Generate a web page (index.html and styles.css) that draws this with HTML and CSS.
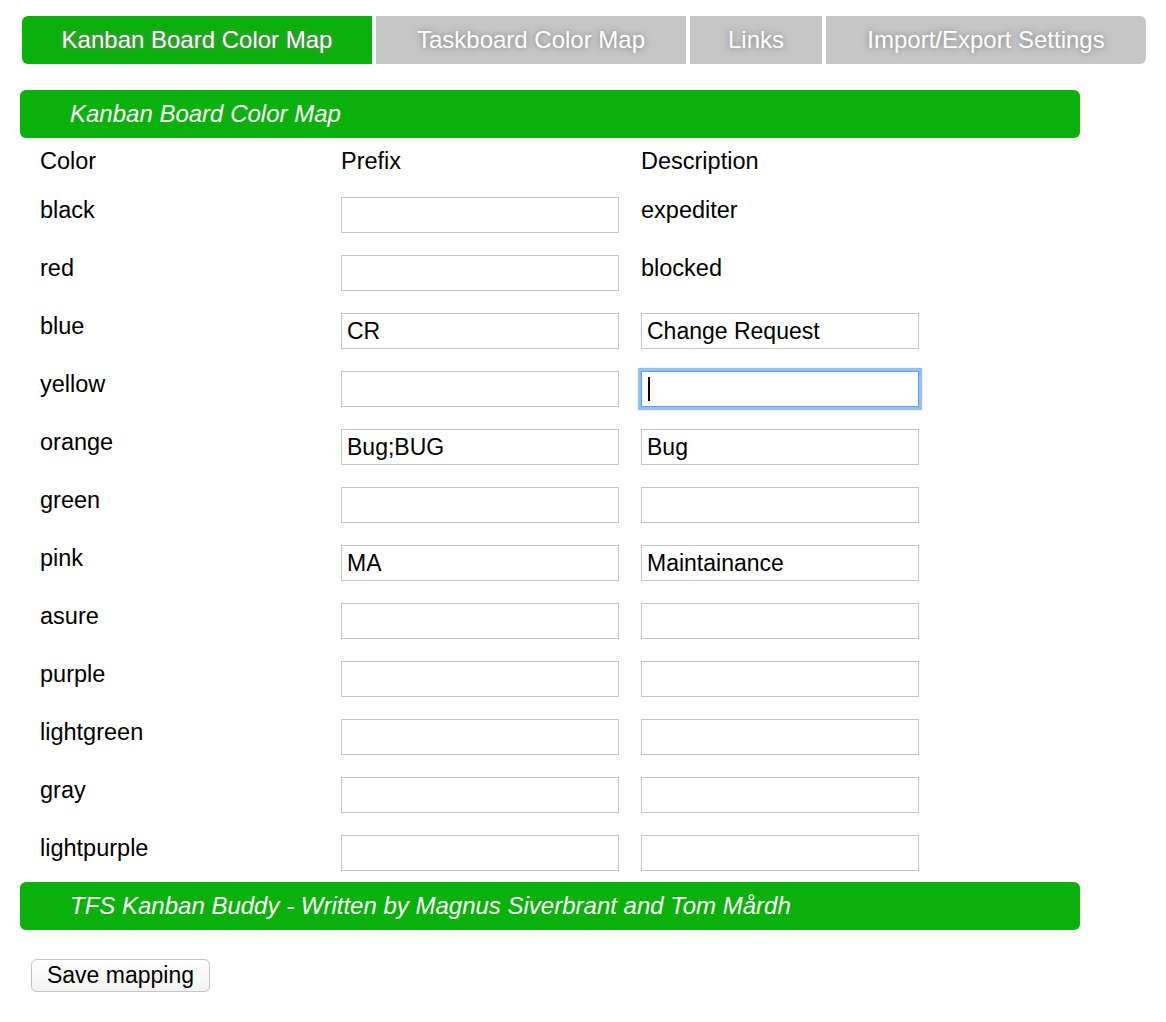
FILE: index.html
```html
<!DOCTYPE html>
<html lang="en">

<head>
    <meta charset="UTF-8">
    <title>TFS Kanban Buddy - Options</title>
    <link rel="stylesheet" href="styles.css">
</head>

<body>
    <div class="page">
        <div class="tabs">
            <div class="tab active" id="tab-kanban">Kanban Board Color Map</div>
            <div class="tab" id="tab-task">Taskboard Color Map</div>
            <div class="tab" id="tab-links">Links</div>
            <div class="tab last" id="tab-import">Import/Export Settings</div>
        </div>

        <div class="section">
            <div class="bar">Kanban Board Color Map</div>
            <div class="map">
                <div class="head">Color</div>
                <div class="head">Prefix</div>
                <div class="head">Description</div>

                <div class="label">black</div>
                <div><input type="text" class="field"></div>
                <div class="label">expediter</div>

                <div class="label">red</div>
                <div><input type="text" class="field"></div>
                <div class="label">blocked</div>

                <div class="label">blue</div>
                <div><input type="text" class="field" value="CR"></div>
                <div><input type="text" class="field" value="Change Request"></div>

                <div class="label">yellow</div>
                <div><input type="text" class="field"></div>
                <div class="focus"><input type="text" class="field focused"></div>

                <div class="label">orange</div>
                <div><input type="text" class="field" value="Bug;BUG"></div>
                <div><input type="text" class="field" value="Bug"></div>

                <div class="label">green</div>
                <div><input type="text" class="field"></div>
                <div><input type="text" class="field"></div>

                <div class="label">pink</div>
                <div><input type="text" class="field" value="MA"></div>
                <div><input type="text" class="field" value="Maintainance"></div>

                <div class="label">asure</div>
                <div><input type="text" class="field"></div>
                <div><input type="text" class="field"></div>

                <div class="label">purple</div>
                <div><input type="text" class="field"></div>
                <div><input type="text" class="field"></div>

                <div class="label">lightgreen</div>
                <div><input type="text" class="field"></div>
                <div><input type="text" class="field"></div>

                <div class="label">gray</div>
                <div><input type="text" class="field"></div>
                <div><input type="text" class="field"></div>

                <div class="label">lightpurple</div>
                <div><input type="text" class="field"></div>
                <div><input type="text" class="field"></div>
            </div>
            <div class="bar">TFS Kanban Buddy - Written by Magnus Siverbrant and Tom Mårdh</div>
        </div>

        <button class="save" type="button">Save mapping</button>
    </div>
</body>

</html>
```

FILE: styles.css
```css
body {
    margin: 0;
    padding: 0;
    background-color: #ffffff;
    color: #000000;
    font-family: "Liberation Sans", Arial, Helvetica, sans-serif;
}

.page {
    padding: 16px 0 0 20px;
}

.tabs {
    display: flex;
    flex-direction: row;
    gap: 4px;
    margin-left: 2px;
}

.tab {
    height: 48px;
    line-height: 48px;
    text-align: center;
    font-size: 24px;
    color: white;
    background-color: #c6c6c6;
    text-shadow: 0 0 6px #7a7a7a;
    white-space: nowrap;
}

#tab-kanban {
    width: 350px;
}

#tab-task {
    width: 310px;
}

#tab-links {
    width: 132px;
}

#tab-import {
    width: 320px;
}

.tab.active {
    background-color: #0bb10b;
    border-radius: 6px 0 0 6px;
}

.tab.last {
    border-radius: 0 6px 6px 0;
}

.section {
    width: 1060px;
    margin-top: 26px;
}

.bar {
    height: 48px;
    line-height: 48px;
    padding-left: 50px;
    background-color: #0bb10b;
    border-radius: 6px;
    color: white;
    font-size: 24px;
    font-style: italic;
}

.map {
    display: grid;
    grid-template-columns: 301px 300px 280px;
    row-gap: 22px;
    align-items: start;
    padding: 10px 0 11px 20px;
}

.head,
.label {
    font-size: 23.5px;
    line-height: 27px;
}

.field {
    display: block;
    width: 278px;
    height: 36px;
    box-sizing: border-box;
    margin: 0;
    padding: 0 5px;
    border: 1px solid #c4c4c4;
    border-radius: 0;
    background-color: white;
    font-family: "Liberation Sans", Arial, Helvetica, sans-serif;
    font-size: 23px;
    color: #000000;
    outline: none;
}

.focus {
    position: relative;
    width: 278px;
}

.field.focused {
    border-color: #5f9fee;
    box-shadow: 0 0 1px 3px #92c0f7;
}

.focus::after {
    content: "";
    position: absolute;
    left: 7px;
    top: 6px;
    width: 2px;
    height: 24px;
    background-color: #000000;
}

.save {
    display: block;
    margin: 29px 0 0 11px;
    width: 179px;
    height: 33px;
    padding: 0;
    border: 1px solid #c4c4c4;
    border-radius: 6px;
    background: linear-gradient(#ffffff, #f3f3f3);
    box-shadow: 0 1px 1px rgba(0, 0, 0, 0.08);
    font-family: "Liberation Sans", Arial, Helvetica, sans-serif;
    font-size: 23px;
    color: #000000;
}
```
